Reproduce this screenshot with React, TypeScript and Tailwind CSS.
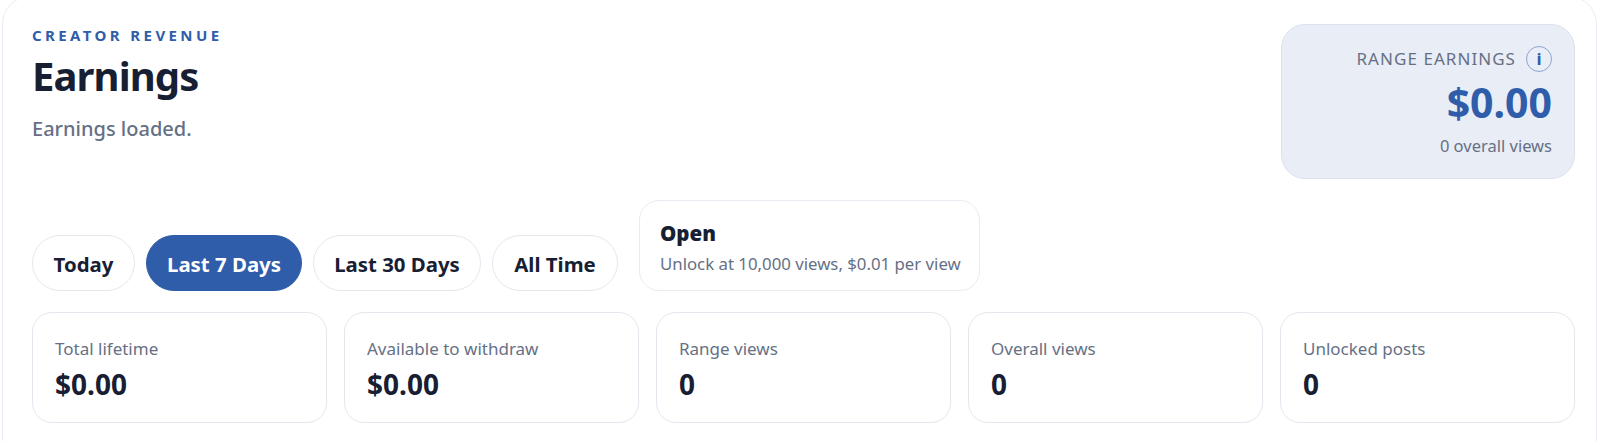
const FONT = "font-['Noto_Sans','Open_Sans',sans-serif]";

const ranges = [
  { label: "Today", width: "w-[103px]" },
  { label: "Last 7 Days", width: "w-[156px]" },
  { label: "Last 30 Days", width: "w-[168px]" },
  { label: "All Time", width: "w-[126px]" },
];

const stats = [
  { label: "Total lifetime", value: "$0.00" },
  { label: "Available to withdraw", value: "$0.00" },
  { label: "Range views", value: "0" },
  { label: "Overall views", value: "0" },
  { label: "Unlocked posts", value: "0" },
];

const App = () => {
  return (
    <div className={`h-[441px] overflow-hidden bg-white pl-[2px] pr-[3px] ${FONT}`}>
      <div className="-mt-[4px] h-[470px] rounded-t-[28px] border border-[#e9ecf4] bg-white pl-[29px] pr-[21px] pt-[27px]">
        <div className="flex items-start justify-between">
          <div>
            <p className="mt-[1px] text-[15px] leading-[20px] font-bold tracking-[3.4px] text-[#2f5daa]">
              CREATOR REVENUE
            </p>
            <h1 className="mt-[5px] text-[40px] leading-[52px] font-bold tracking-[-0.9px] text-[#172033]">
              Earnings
            </h1>
            <p className="mt-[14px] text-[20px] leading-[26px] font-medium text-[#667085]">
              Earnings loaded.
            </p>
          </div>
          <div className="flex h-[155px] w-[294px] flex-col items-end rounded-[24px] border border-[#dbe1ee] bg-[#e9edf6] pr-[22px] pt-[21px]">
            <div className="flex items-center gap-[10px]">
              <span className="text-[17px] leading-[24px] tracking-[1.05px] text-[#667085]">
                RANGE EARNINGS
              </span>
              <span className="flex h-[26px] w-[26px] items-center justify-center rounded-full border border-[#8fa4cc] text-[15px] leading-none font-extrabold text-[#2f5daa]">
                i
              </span>
            </div>
            <p className="mt-[4px] text-[41px] leading-[52px] font-bold text-[#2f5daa]">$0.00</p>
            <p className="mt-[7px] text-[16.5px] leading-[22px] text-[#667085]">0 overall views</p>
          </div>
        </div>

        <div className="mt-[21px] flex items-end gap-[11px]">
          {ranges.map((range) => (
            <button
              key={range.label}
              className={`h-[56px] rounded-full border pt-[3px] text-[20.4px] font-bold ${range.width} ${
                range.label === "Last 7 Days"
                  ? "border-[#2f5daa] bg-[#2f5daa] text-white"
                  : "border-[#e4e7ee] bg-white text-[#172033]"
              }`}
            >
              {range.label}
            </button>
          ))}
          <div className="ml-[10px] h-[91px] w-[341px] rounded-[20px] border border-[#e8ebf2] bg-white pl-[20px] pt-[19px]">
            <p className="text-[20.5px] leading-[26px] font-black text-[#172033]">Open</p>
            <p className="mt-[7px] text-[16.8px] leading-[22px] text-[#667085]">
              Unlock at 10,000 views, $0.01 per view
            </p>
          </div>
        </div>

        <div className="mt-[21px] grid grid-cols-5 gap-[17px]">
          {stats.map((stat) => (
            <div
              key={stat.label}
              className="h-[111px] rounded-[20px] border border-[#e4e7ee] bg-white pl-[22px] pt-[25px]"
            >
              <p className="text-[17px] leading-[22px] text-[#667085]">{stat.label}</p>
              <p className="mt-[6px] text-[28px] leading-[36px] font-bold text-[#172033]">
                {stat.value}
              </p>
            </div>
          ))}
        </div>
      </div>
    </div>
  );
};

export default App;
